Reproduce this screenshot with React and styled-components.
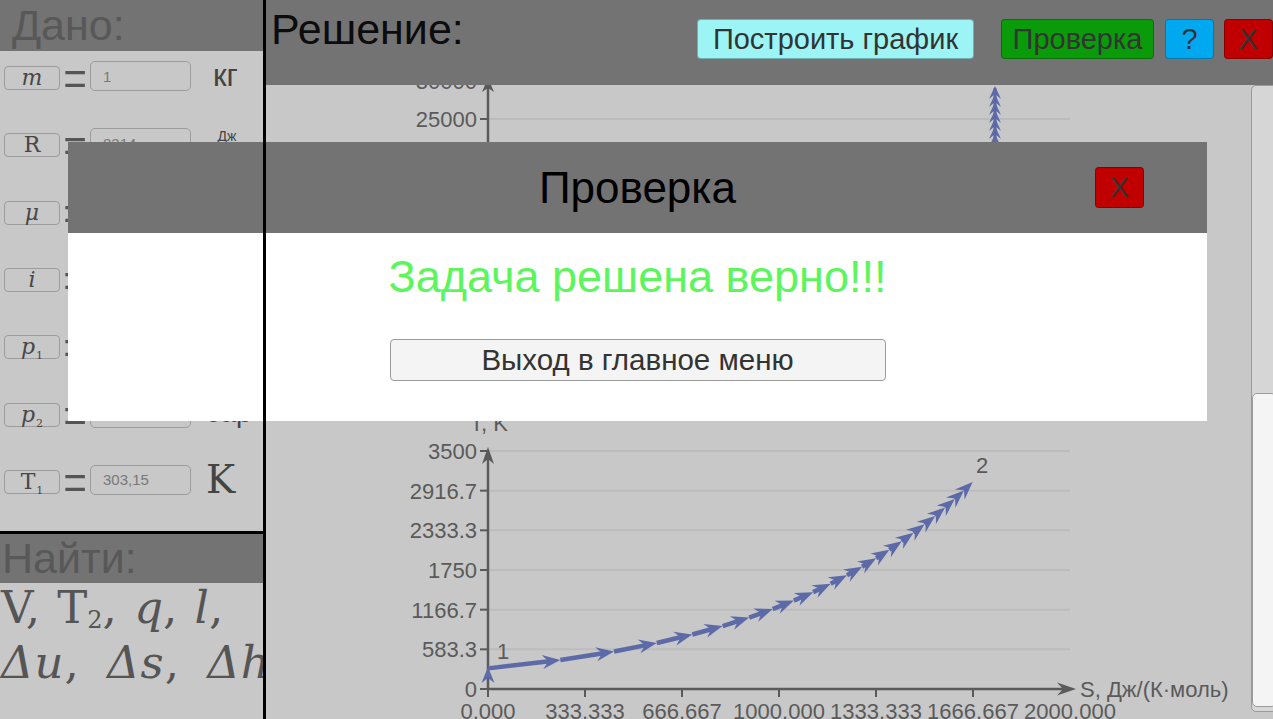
import React from 'react';
import styled, { createGlobalStyle } from 'styled-components';

const dark = '#737373';
const panel = '#c8c8c8';
const ink = '#5a5a5a';

const GlobalStyle = createGlobalStyle`
  html, body { margin: 0; padding: 0; }
  body {
    background: ${panel};
    font-family: "Liberation Sans", Arial, sans-serif;
    overflow: hidden;
  }
`;

const Page = styled.div`
  position: relative;
  display: grid;
  grid-template-columns: 263px 3px minmax(0, 1fr);
  width: 1273px;
  height: 719px;
  overflow: hidden;
  background: ${panel};
`;

/* ---------- left column: Дано / Найти ---------- */

const Given = styled.aside`
  display: flex;
  flex-direction: column;
  min-width: 0;
  overflow: hidden;
`;

const Band = styled.div`
  flex-shrink: 0;
  height: ${(p) => p.$h}px;
  line-height: ${(p) => p.$h}px;
  padding-left: ${(p) => p.$pad}px;
  background: ${dark};
  color: #585858;
  font-size: 43px;
  white-space: nowrap;
`;

const Rows = styled.div`
  flex-shrink: 0;
  height: 480px;
`;

const Row = styled.div`
  display: flex;
  align-items: flex-start;
  height: 67.33px;
  box-sizing: border-box;
  padding: 10px 0 0 4px;
  white-space: nowrap;
`;

const Symbol = styled.span`
  display: inline-flex;
  align-items: center;
  justify-content: center;
  flex-shrink: 0;
  width: 56px;
  height: 24px;
  box-sizing: border-box;
  margin-top: 5px;
  border: 1px solid #9c9c9c;
  border-radius: 4px;
  font-family: "DejaVu Serif", serif;
  font-size: 22px;
  font-style: ${(p) => (p.$italic ? 'italic' : 'normal')};
  color: #474747;
  line-height: 1;
  sub {
    font-size: 11px;
    font-style: normal;
    line-height: 0;
    vertical-align: -5px;
    margin-left: 1px;
  }
`;

const Equals = styled.span`
  flex-shrink: 0;
  width: 30px;
  height: 30px;
  line-height: 30px;
  text-align: center;
  font-family: "Liberation Serif", serif;
  font-size: 42px;
  color: #555;
  transform: translateY(3px) scaleY(1.5);
`;

const Field = styled.input`
  flex-shrink: 0;
  width: 101px;
  height: 30px;
  box-sizing: border-box;
  margin: 0;
  padding: 0 0 0 12px;
  border: 1px solid #9c9c9c;
  border-radius: 5px;
  background: ${panel};
  color: #787878;
  font-family: "Liberation Sans", Arial, sans-serif;
  font-size: 15px;
  outline: none;
`;

const Unit = styled.span`
  flex-shrink: 0;
  margin-left: ${(p) => p.$gap || 22}px;
  line-height: 30px;
  font-family: ${(p) => (p.$serif ? '"DejaVu Serif", serif' : '"Liberation Sans", Arial, sans-serif')};
  font-size: ${(p) => p.$size || 31}px;
  color: #444;
`;

const Frac = styled.span`
  display: inline-flex;
  flex-direction: column;
  align-items: center;
  margin: 0 0 0 24px;
  font-size: 14px;
  line-height: 16px;
  color: #444;
  span + span {
    border-top: 1px solid #444;
  }
`;

const Formula = styled.div`
  padding-left: 1px;
  font-family: "DejaVu Serif", serif;
  font-size: 45px;
  line-height: 55px;
  color: #555;
  white-space: nowrap;
  sub {
    font-size: 24px;
    line-height: 0;
    vertical-align: -5px;
  }
`;

const FormulaLine = styled.div`
  margin-top: ${(p) => p.$shift || 0}px;
  word-spacing: ${(p) => p.$ws || 3}px;
  letter-spacing: ${(p) => p.$ls || 0}px;
`;

const Var = styled.i`
  font-style: italic;
`;

const Divider = styled.div`
  position: relative;
  z-index: 10;
  background: #000;
`;

const HLine = styled.div`
  flex-shrink: 0;
  height: 3px;
  background: #000;
`;

/* ---------- right column: Решение ---------- */

const Main = styled.main`
  display: flex;
  flex-direction: column;
  min-width: 0;
`;

const Toolbar = styled.header`
  display: flex;
  align-items: flex-start;
  flex-shrink: 0;
  height: 85px;
  padding-left: 5px;
  background: ${dark};
`;

const Title = styled.h1`
  margin: 5px 0 0;
  font-weight: normal;
  font-size: 43px;
  line-height: 48px;
  color: #0c0c0c;
`;

const Actions = styled.div`
  display: flex;
  margin: 19px 0 0 auto;
`;

const Button = styled.button`
  height: 40px;
  width: ${(p) => p.$w}px;
  margin-left: ${(p) => p.$gap || 0}px;
  padding: 0;
  border: 1px solid rgba(0, 0, 0, 0.28);
  border-radius: 4px;
  background: ${(p) => p.$bg};
  color: #333;
  font-family: "Liberation Sans", Arial, sans-serif;
  font-size: ${(p) => p.$size || 29}px;
  line-height: 1;
  white-space: nowrap;
`;

const Content = styled.div`
  display: flex;
  flex: 1;
  min-height: 0;
`;

const ChartView = styled.div`
  flex: 1;
  min-width: 0;
  overflow: hidden;
  svg {
    display: block;
  }
`;

const Track = styled.div`
  display: flex;
  flex-direction: column;
  justify-content: flex-end;
  flex-shrink: 0;
  width: 26px;
  height: 627px;
  margin-right: -4px;
  padding-bottom: 4px;
  box-sizing: border-box;
  border: 1px solid #9a9a9a;
  border-radius: 5px;
  background: #d6d6d6;
`;

const Thumb = styled.div`
  height: 314px;
  box-sizing: border-box;
  border: 1px solid #9a9a9a;
  border-radius: 5px;
  background: #f4f4f4;
`;

const ChartText = styled.text`
  font-family: "Liberation Sans", Arial, sans-serif;
  font-size: 22px;
  fill: ${ink};
`;

/* ---------- modal ---------- */

const Modal = styled.section`
  position: absolute;
  left: 68px;
  top: 142px;
  z-index: 5;
  width: 1139px;
`;

const ModalHead = styled.div`
  display: grid;
  grid-template-columns: 1fr auto 1fr;
  align-items: center;
  height: 91px;
  background: ${dark};
`;

const ModalTitle = styled.h2`
  grid-column: 2;
  margin: 0;
  font-weight: normal;
  font-size: 44px;
  color: #000;
`;

const Close = styled(Button)`
  justify-self: end;
  width: 49px;
  height: 41px;
  margin-right: 63px;
`;

const ModalBody = styled.div`
  display: flex;
  flex-direction: column;
  align-items: center;
  height: 188px;
  box-sizing: border-box;
  padding-top: 20px;
  background: #fff;
`;

const Message = styled.p`
  margin: 0;
  font-size: 45px;
  line-height: 48px;
  color: #5cf55c;
`;

const ExitButton = styled.button`
  width: 496px;
  height: 42px;
  margin-top: 38px;
  border: 1px solid #9a9a9a;
  border-radius: 4px;
  background: #f4f4f4;
  color: #333;
  font-family: "Liberation Sans", Arial, sans-serif;
  font-size: 29.5px;
`;

/* ---------- chart data ---------- */

const X0 = 488;
const Y0 = 689;
const xOf = (s) => X0 + s * 0.291;
const yOf = (t) => Y0 - t * 0.068;
const BLUE = '#5d6aa8';

function head(x, y, dx, dy, len = 18, half = 7, notch = 12) {
  const m = Math.hypot(dx, dy);
  const ux = dx / m;
  const uy = dy / m;
  const bx = x - ux * len;
  const by = y - uy * len;
  const cx = x - ux * notch;
  const cy = y - uy * notch;
  return `${x},${y} ${bx - uy * half},${by + ux * half} ${cx},${cy} ${bx + uy * half},${by - ux * half}`;
}

const curve = Array.from({ length: 23 }, (_, k) => {
  const T = 303.15 + k * 124.6;
  const S = 722 * Math.log(T / 303.15);
  return [xOf(S), yOf(T)];
});

const yTicks = ['0', '583.3', '1166.7', '1750', '2333.3', '2916.7', '3500'];
const xTicks = ['0.000', '333.333', '666.667', '1000.000', '1333.333', '1666.667', '2000.000'];

function Chart() {
  return (
    <svg width="985" height="634" viewBox="266 85 985 634">
      {/* upper chart, scrolled mostly out of view */}
      {[81, 119].map((y, i) => (
        <g key={y}>
          <line x1="488" x2="1070" y1={y} y2={y} stroke="#bcbcbc" strokeWidth="2" />
          <line x1="480" x2="488" y1={y} y2={y} stroke={ink} strokeWidth="2" />
          <ChartText x="477" y={y + 8} textAnchor="end">{i === 0 ? '30000' : '25000'}</ChartText>
        </g>
      ))}
      <line x1="488" x2="488" y1="88" y2="160" stroke={ink} strokeWidth="2.5" />
      <polygon points={head(488, 78, 0, -1, 14, 6, 10)} fill={ink} />
      <line x1="995" x2="995" y1="88" y2="160" stroke={BLUE} strokeWidth="3" />
      {[86, 94, 102, 110, 118, 126, 134, 142].map((y) => (
        <polygon key={y} points={head(995, y, 0, -1, 13, 6, 8)} fill={BLUE} />
      ))}

      {/* lower chart: T-S */}
      {yTicks.map((t, i) => {
        const y = Y0 - i * 39.67;
        return (
          <g key={t}>
            {i > 0 && <line x1="488" x2="1070" y1={y} y2={y} stroke="#bcbcbc" strokeWidth="2" />}
            <line x1="480" x2="488" y1={y} y2={y} stroke={ink} strokeWidth="2" />
            <ChartText x="477" y={y + 8} textAnchor="end">{t}</ChartText>
          </g>
        );
      })}
      {xTicks.map((t, i) => {
        const x = X0 + i * 97;
        return (
          <g key={t}>
            {i < 6 && <line x1={x} x2={x} y1="689" y2="697" stroke={ink} strokeWidth="2" />}
            <ChartText x={x} y="719" textAnchor="middle">{t}</ChartText>
          </g>
        );
      })}
      <line x1="488" x2="488" y1="690" y2="455" stroke={ink} strokeWidth="2.5" />
      <polygon points={head(488, 447, 0, -1, 17, 6, 12)} fill={ink} />
      <line x1="487" x2="1064" y1="689" y2="689" stroke={ink} strokeWidth="2.5" />
      <polygon points={head(1076, 689, 1, 0, 19, 6.5, 13)} fill={ink} />
      <ChartText x="489" y="431" textAnchor="middle">T, K</ChartText>
      <ChartText x="1080" y="697">S, Дж/(К·моль)</ChartText>
      <ChartText x="497" y="659">1</ChartText>
      <ChartText x="976" y="473">2</ChartText>

      <polygon points={head(488, 667, 0, -1, 16, 6.5, 11)} fill={BLUE} />
      {curve.slice(1).map(([x, y], k) => {
        const [px, py] = curve[k];
        const dx = x - px;
        const dy = y - py;
        const m = Math.hypot(dx, dy);
        return (
          <g key={k}>
            <line
              x1={px}
              y1={py}
              x2={x - (dx / m) * 11}
              y2={y - (dy / m) * 11}
              stroke={BLUE}
              strokeWidth="4.5"
            />
            <polygon points={head(x, y, dx, dy)} fill={BLUE} />
          </g>
        );
      })}
    </svg>
  );
}

const given = [
  { sym: 'm', italic: true, value: '1', unit: <Unit>кг</Unit> },
  { sym: 'R', value: '8314', unit: <Frac><span>Дж</span><span>кг·К</span></Frac> },
  { sym: 'μ', italic: true, value: '28', unit: <Frac><span>кг</span><span>кмоль</span></Frac> },
  { sym: 'i', italic: true, value: '5', unit: null },
  { sym: 'p', sub: '1', italic: true, value: '1', unit: <Unit $size={28} $gap={14}>бар</Unit> },
  { sym: 'p', sub: '2', italic: true, value: '10', unit: <Unit $size={28} $gap={14}>бар</Unit> },
  { sym: 'T', sub: '1', value: '303,15', unit: <Unit $serif $size={39} $gap={15}>K</Unit> },
];

export default function App() {
  return (
    <>
      <GlobalStyle />
      <Page>
        <Given>
          <Band $h={51} $pad={12}>Дано:</Band>
          <Rows>
            {given.map((g, i) => (
              <Row key={i}>
                <Symbol $italic={g.italic}>
                  <span>
                    {g.sym}
                    {g.sub && <sub>{g.sub}</sub>}
                  </span>
                </Symbol>
                <Equals>=</Equals>
                <Field readOnly defaultValue={g.value} />
                {g.unit}
              </Row>
            ))}
          </Rows>
          <HLine />
          <Band $h={49} $pad={2}>Найти:</Band>
          <Formula>
            <FormulaLine $shift={-3}>
              V, T<sub>2</sub>, <Var>q</Var>, <Var>l</Var>,
            </FormulaLine>
            <FormulaLine $ws={12} $ls={1}>
              <Var>Δu</Var>, <Var>Δs</Var>, <Var>Δh</Var>
            </FormulaLine>
          </Formula>
        </Given>

        <Divider />

        <Main>
          <Toolbar>
            <Title>Решение:</Title>
            <Actions>
              <Button $w={277} $bg="#9cf4f4">Построить график</Button>
              <Button $w={153} $gap={27} $bg="#0a9b0a">Проверка</Button>
              <Button $w={49} $gap={11} $bg="#00a8f0">?</Button>
              <Button $w={49} $gap={10} $bg="#c00000">X</Button>
            </Actions>
          </Toolbar>
          <Content>
            <ChartView>
              <Chart />
            </ChartView>
            <Track>
              <Thumb />
            </Track>
          </Content>
        </Main>

        <Modal>
          <ModalHead>
            <ModalTitle>Проверка</ModalTitle>
            <Close $bg="#c00000" $size={28}>X</Close>
          </ModalHead>
          <ModalBody>
            <Message>Задача решена верно!!!</Message>
            <ExitButton>Выход в главное меню</ExitButton>
          </ModalBody>
        </Modal>
      </Page>
    </>
  );
}
